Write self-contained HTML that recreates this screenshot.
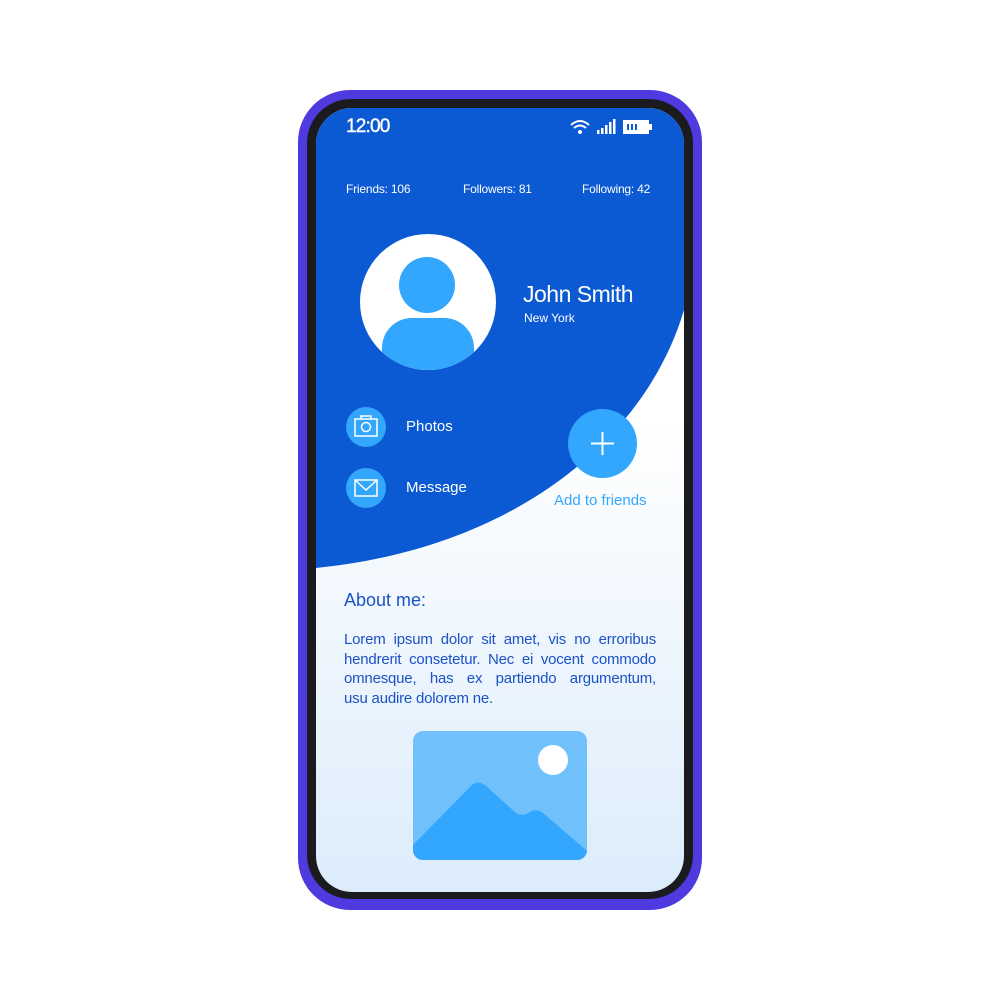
<!DOCTYPE html>
<html><head><meta charset="utf-8"><style>
*{margin:0;padding:0;box-sizing:border-box}
body{width:1000px;height:984px;background:#fff;position:relative;overflow:hidden;font-family:"Liberation Sans",sans-serif}
.a{position:absolute;white-space:nowrap}
.w{color:#fff}
.line{position:absolute;left:344px;width:312px;font-size:15px;color:#1b52c6;text-align:justify;text-align-last:justify;white-space:nowrap;letter-spacing:-0.2px}
</style></head><body>
<div class="a" style="left:298px;top:90px;width:404px;height:820px;border-radius:52px;background:#4f3ae0"></div>
<div class="a" style="left:307px;top:99px;width:386px;height:800px;border-radius:44px;background:#1b1b1f"></div>
<div class="a" style="left:316px;top:108px;width:368px;height:784px;border-radius:36px;overflow:hidden;background:linear-gradient(#ffffff 40%,#dcecfb)">
<svg width="368" height="784" style="position:absolute;left:0;top:0">
<path d="M0,0 H368 V202 C330,330 200,440 0,460 Z" fill="#0b59d3"/>
</svg>
</div>
<div class="a w" style="left:346px;top:116px;font-size:19px;letter-spacing:-0.8px;-webkit-text-stroke:0.4px #fff">12:00</div>
<svg class="a" style="left:568px;top:117px" width="86" height="20">
<path d="M3,8 Q12,0 21,8" stroke="#fff" stroke-width="2" fill="none"/>
<path d="M6,11 Q12,6 18,11" stroke="#fff" stroke-width="2" fill="none"/>
<circle cx="12" cy="15" r="2" fill="#fff"/>
<rect x="29" y="13" width="2.5" height="4" fill="#fff"/><rect x="33" y="11" width="2.5" height="6" fill="#fff"/><rect x="37" y="8" width="2.5" height="9" fill="#fff"/><rect x="41" y="5" width="2.5" height="12" fill="#fff"/><rect x="45" y="2" width="2.5" height="15" fill="#fff"/>
<rect x="55" y="3" width="26" height="14" fill="#fff"/><rect x="81" y="7" width="3" height="6" fill="#fff"/>
<rect x="59" y="7" width="2" height="6" fill="#0b59d3"/><rect x="63" y="7" width="2" height="6" fill="#0b59d3"/><rect x="67" y="7" width="2" height="6" fill="#0b59d3"/>
</svg>
<div class="a w" style="left:346px;top:182px;font-size:12px;letter-spacing:-0.2px">Friends: 106</div>
<div class="a w" style="left:463px;top:182px;font-size:12px;letter-spacing:-0.2px">Followers: 81</div>
<div class="a w" style="left:582px;top:182px;font-size:12px;letter-spacing:-0.2px">Following: 42</div>
<svg class="a" style="left:360px;top:234px" width="136" height="136">
<defs><clipPath id="c"><circle cx="68" cy="68" r="68"/></clipPath></defs>
<circle cx="68" cy="68" r="68" fill="#fff"/>
<circle cx="67" cy="51" r="28" fill="#33a6fd"/>
<rect x="22" y="84" width="92" height="70" rx="30" fill="#33a6fd" clip-path="url(#c)"/>
</svg>
<div class="a w" style="left:523px;top:281px;font-size:23px;letter-spacing:-0.5px">John Smith</div>
<div class="a w" style="left:524px;top:311px;font-size:12px">New York</div>
<div class="a" style="left:346px;top:407px;width:40px;height:40px;border-radius:50%;background:#33a6fd"></div>
<svg class="a" style="left:346px;top:407px" width="40" height="40"><rect x="9" y="12" width="22" height="17" fill="none" stroke="#fff" stroke-width="1.5"/><path d="M15,12 V9 H25 V12" fill="none" stroke="#fff" stroke-width="1.5"/><circle cx="20" cy="20" r="4.5" fill="none" stroke="#fff" stroke-width="1.5"/></svg>
<div class="a w" style="left:406px;top:418px;font-size:15px">Photos</div>
<div class="a" style="left:346px;top:468px;width:40px;height:40px;border-radius:50%;background:#33a6fd"></div>
<svg class="a" style="left:346px;top:468px" width="40" height="40"><rect x="9" y="12" width="22" height="16" fill="none" stroke="#fff" stroke-width="1.5"/><path d="M9,12 L20,22 L31,12" fill="none" stroke="#fff" stroke-width="1.5"/></svg>
<div class="a w" style="left:406px;top:479px;font-size:15px">Message</div>
<div class="a" style="left:568px;top:409px;width:69px;height:69px;border-radius:50%;background:#33a6fd"></div>
<svg class="a" style="left:568px;top:409px" width="69" height="69"><path d="M34.5,23 V46 M23,34.5 H46" stroke="#fff" stroke-width="2"/></svg>
<div class="a" style="left:554px;top:492px;font-size:15px;color:#33a6fd">Add to friends</div>
<div class="a" style="left:344px;top:590px;font-size:18px;color:#1b52c6">About me:</div>
<div class="line" style="top:631px">Lorem ipsum dolor sit amet, vis no erroribus</div>
<div class="line" style="top:651px">hendrerit consetetur. Nec ei vocent commodo</div>
<div class="line" style="top:670px">omnesque, has ex partiendo argumentum,</div>
<div class="line" style="top:690px;text-align-last:left">usu audire dolorem ne.</div>
<svg class="a" style="left:413px;top:731px" width="174" height="129">
<defs><clipPath id="r"><rect width="174" height="129" rx="10"/></clipPath></defs>
<rect width="174" height="129" rx="10" fill="#70c1fb"/>
<path clip-path="url(#r)" d="M0,114 L58,55 Q65,48 73,55 L103,82 Q110,86 117,81 Q123,77 130,82 L174,120 V129 H0 Z" fill="#33a6fd"/>
<circle cx="140" cy="29" r="15" fill="#fff"/>
</svg>
</body></html>
